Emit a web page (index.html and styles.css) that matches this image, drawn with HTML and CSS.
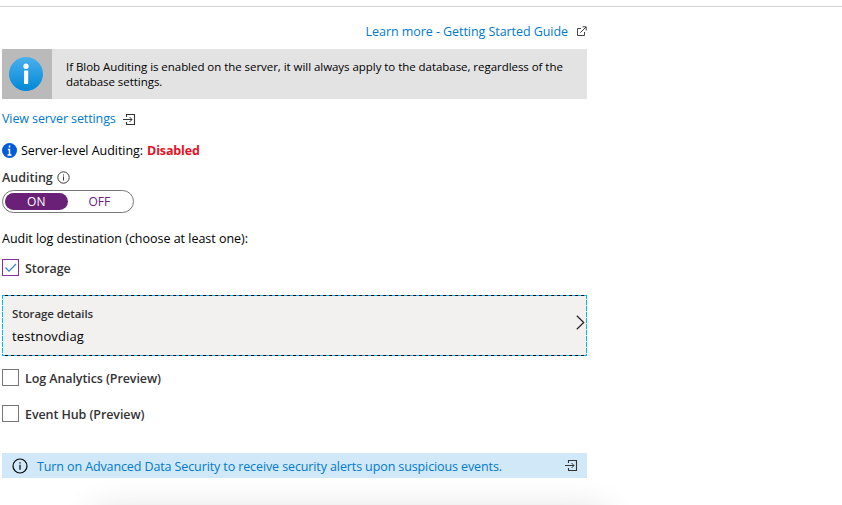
FILE: index.html
```html
<!DOCTYPE html>
<html lang="en">
<head>
<meta charset="utf-8">
<title>Auditing settings</title>
<link rel="stylesheet" href="styles.css">
</head>
<body>
<svg class="defs" width="0" height="0">
  <symbol id="enter" viewBox="0 0 13 13"><path d="M3.5 4V1.500h8v10h-8V9" fill="none" stroke="#333" stroke-width="1.1"/><path d="M0 6.500h9M6.500 4l2.500 2.500L6.500 9" fill="none" stroke="#333"/></symbol>
  <symbol id="info" viewBox="0 0 16 16"><circle cx="8" cy="8" r="7" fill="none" stroke="currentColor" stroke-width="1.200"/><path d="M8 6.700v5M8 4.200v1.400" stroke="currentColor" stroke-width="1.200"/></symbol>
</svg>
<main class="panel">
  <div class="learn"><a class="t-learn">Learn more - Getting Started Guide</a>
    <svg class="external" viewBox="0 0 11 11"><path d="M5 2.500H1.500v7h7V6M6.500 .8h3.700v3.700M10 1L4.300 6.700" fill="none" stroke="#444"/></svg>
  </div>
  <div class="notice">
    <div class="notice-icon"><svg viewBox="0 0 34 34"><defs><linearGradient id="blue" x2="0" y2="1"><stop stop-color="#4bb0ec"/><stop offset="1" stop-color="#0088d8"/></linearGradient></defs><circle cx="17" cy="17" r="17" fill="url(#blue)"/><circle cx="17" cy="9.200" r="2.600" fill="#fff"/><rect x="15" y="13.500" width="4.200" height="13.500" rx=".8" fill="#fff"/></svg></div>
    <p>If Blob Auditing is enabled on the server, it will always apply to the database, regardless of the<br>database settings.</p>
  </div>
  <div class="view"><a class="t-view">View server settings</a><svg class="enter"><use href="#enter"/></svg></div>
  <div class="server"><svg viewBox="0 0 15 15"><circle cx="7.500" cy="7.500" r="7.500" fill="#015cda"/><path d="M7.500 2.500v2M5.800 6.500h1.700v5.500M5.500 12h4" fill="none" stroke="#fff" stroke-width="1.500"/></svg><span class="t-server">Server-level Auditing:</span><strong>Disabled</strong></div>
  <div class="auditing"><span>Auditing</span><svg><use href="#info"/></svg></div>
  <div class="toggle"><span class="on">ON</span><span class="off">OFF</span></div>
  <div class="destination">Audit log destination (choose at least one):</div>
  <div class="option"><span class="box checked"><svg viewBox="0 0 15 15"><path d="M2.500 7.500l3.500 3.700L13 4" fill="none" stroke="#2f80e0" stroke-width="1.200"/></svg></span><span class="label">Storage</span></div>
  <div class="card">
    <div><div class="card-title">Storage details</div><div class="card-value">testnovdiag</div></div>
    <svg class="chevron" viewBox="0 0 9 15"><path d="M.8 .8l6.900 6.700L.8 14.200" fill="none" stroke="#222" stroke-width="1.200"/></svg>
    <svg class="outline" viewBox="0 0 585 61"><rect x=".5" y=".5" width="584" height="60" fill="none" stroke="#00bcf2"/><path d="M3 .5H585M3 60.500H585" stroke="#000" stroke-dasharray="3 3"/><path d="M.5 4V60M584.500 4V60" stroke="#fff" stroke-opacity=".75" stroke-dasharray="1 5"/></svg>
  </div>
  <div class="option log"><span class="box"></span><span class="label">Log Analytics (Preview)</span></div>
  <div class="option hub"><span class="box"></span><span class="label">Event Hub (Preview)</span></div>
  <div class="banner"><svg class="banner-info"><use href="#info"/></svg><a class="t-banner">Turn on Advanced Data Security to receive security alerts upon suspicious events.</a><svg class="enter"><use href="#enter"/></svg></div>
</main>
<div class="shadow"></div>
</body>
</html>
```
FILE: styles.css
```css
* { box-sizing: border-box; }
body { margin: 0; height: 505px; overflow: hidden; position: relative; background: #fff; color: #000; font: 12.5px/18px "Open Sans", "Noto Sans", sans-serif; white-space: nowrap; }
svg { display: block; flex: none; overflow: visible; }
.defs { position: absolute; }
body::before { content: ""; display: block; height: 6px; border-bottom: 1px solid #d4d4d4; }
.panel { width: 587px; padding-left: 2px; display: flex; flex-direction: column; }
a { color: #007acc; }
.learn { height: 42px; padding-top: 7px; display: flex; align-items: center; justify-content: flex-end; }
.t-learn { letter-spacing: -.06px; }
.external { width: 11px; height: 11px; margin-left: 8px; }
.notice { height: 50px; display: flex; background: #e3e3e3; }
.notice-icon { width: 50px; padding-right: 2px; display: grid; place-items: center; background: #bababa; }
.notice-icon svg { width: 34px; height: 34px; }
.notice p { margin: 10px 0 0 14px; font-size: 11.5px; line-height: 15px; letter-spacing: -.045px; }
.view { height: 40px; display: flex; align-items: center; }
.t-view { letter-spacing: -.1px; }
.enter { width: 13px; height: 13px; }
.view .enter { margin-left: 7px; }
.server { height: 24px; display: flex; align-items: center; }
.server svg { width: 15px; height: 15px; margin: -2px 4px 0 0; }
.t-server { letter-spacing: -.04px; }
.server strong { color: #e81123; margin-left: 4px; letter-spacing: -.15px; }
.auditing { height: 27px; padding-top: 2px; display: flex; align-items: center; font-weight: 600; color: #333; }
.auditing svg { width: 13px; height: 13px; margin: -1px 0 0 4px; }
.toggle { width: 132px; height: 23px; padding: 2px; display: flex; border: 1px solid #777; border-radius: 12px; font-size: 12px; line-height: 18px; text-align: center; color: #6b2077; }
.on { width: 63px; height: 17px; border-radius: 9px; background: #6b2077; color: #fff; }
.off { width: 64px; }
.destination { height: 46px; padding-top: 17px; letter-spacing: -.02px; }
.option { height: 17px; display: flex; align-items: center; gap: 6px; color: #333; font-weight: 600; }
.label { padding-top: 2px; letter-spacing: -.09px; }
.box { width: 17px; height: 17px; border: 1px solid #767676; }
.checked { border-color: #8a2da5; }
.card { position: relative; height: 61px; margin-top: 19px; padding: 10px 2px 0 10px; display: flex; justify-content: space-between; background: #f2f1f0; }
.card-title { height: 21px; font-size: 11.5px; font-weight: 600; color: #333; letter-spacing: -.1px; }
.card-value { height: 20px; font-size: 13px; line-height: 20px; letter-spacing: .13px; }
.chevron { width: 9px; height: 15px; margin-top: 10px; }
.outline { position: absolute; left: 0; top: 0; width: 585px; height: 61px; }
.log { margin-top: 13px; }
.hub { margin-top: 19px; }
.banner { height: 25px; margin-top: 31px; padding: 0 9px 0 10px; display: flex; align-items: center; background: #d1e8f8; }
.banner-info { width: 16px; height: 16px; margin-right: 9px; }
.t-banner { padding-top: 2px; letter-spacing: -.11px; }
.banner .enter { margin-left: auto; }
.shadow { position: absolute; left: 0; bottom: 0; width: 842px; height: 27px; overflow: hidden; }
.shadow::before { content: ""; position: absolute; left: 95px; top: 34px; width: 510px; height: 80px; box-shadow: 0 0 36px rgba(0,0,0,.15); }
```
